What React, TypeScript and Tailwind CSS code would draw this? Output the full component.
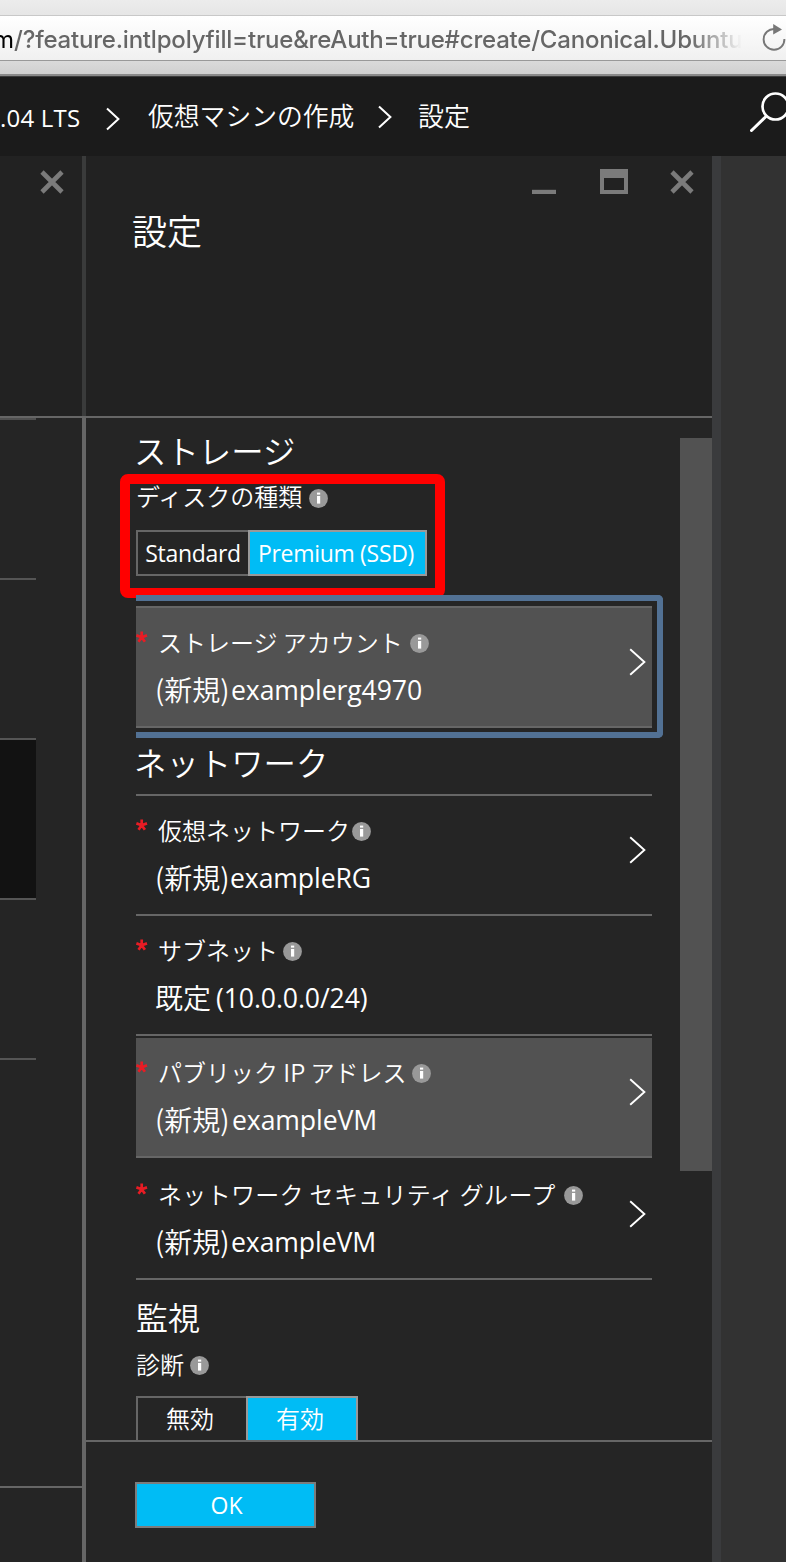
import type { ReactNode } from "react";

function InfoIcon({ className = "" }: { className?: string }) {
  return (
    <svg viewBox="0 0 19 19" className={`h-[19px] w-[19px] shrink-0 ${className}`}>
      <circle cx="9.5" cy="9.5" r="9.4" fill="#999" />
      <rect x="8" y="3.6" width="3.2" height="2" fill="#fff" />
      <rect x="8" y="7" width="3.2" height="7.6" fill="#fff" />
    </svg>
  );
}

function CloseIcon() {
  return (
    <svg viewBox="0 0 24 24" className="h-6 w-6 shrink-0">
      <path d="M2 2 L22 22 M22 2 L2 22" stroke="#7b7b7b" strokeWidth="4.6" fill="none" />
    </svg>
  );
}

function Crumb({ className = "" }: { className?: string }) {
  return (
    <svg viewBox="0 0 14 24" className={`h-6 w-3.5 shrink-0 ${className}`}>
      <path d="M1 1.4 L12.4 12 L1 22.6" stroke="#fff" strokeWidth="2" fill="none" />
    </svg>
  );
}

function RowChevron() {
  return (
    <svg viewBox="0 0 17 28" className="absolute top-10 right-1.5 h-7 w-[17px]">
      <path d="M1.2 1.2 L15.4 14 L1.2 26.8" stroke="#fff" strokeWidth="1.9" fill="none" />
    </svg>
  );
}

function Heading({ children, className }: { children: ReactNode; className: string }) {
  return <h2 className={`shrink-0 font-[350] whitespace-nowrap ${className}`}>{children}</h2>;
}

type SettingProps = {
  label: string;
  labelClass: string;
  prefix: string;
  prefixWidth: string;
  value: string;
  filled?: boolean;
  chevron?: boolean;
};

function Setting({ label, labelClass, prefix, prefixWidth, value, filled, chevron = true }: SettingProps) {
  return (
    <div className={`relative h-[120px] w-[516px] shrink-0 border-b-2 border-[#666] ${filled ? "bg-[#525252]" : ""}`}>
      <div className="flex h-[70px] items-center">
        <svg viewBox="0 0 12 12" className="-mt-3 mr-2.5 h-3 w-3 shrink-0">
          <path d="M5.7 6.2V0.4M5.7 6.2L0.4 4.4M5.7 6.2L11 4.4M5.7 6.2L2.5 10.8M5.7 6.2L8.9 10.8" stroke="#e81c24" strokeWidth="2.7" fill="none" />
        </svg>
        <span className={`mb-0.5 shrink-0 font-['Noto_Sans_CJK_JP',sans-serif] text-2xl leading-none font-[350] whitespace-nowrap ${labelClass}`}>{label}</span>
        <InfoIcon />
      </div>
      <div className="flex h-6 items-center pl-[19px] whitespace-nowrap">
        <span className={`mr-px mb-0.5 shrink-0 font-['Noto_Sans_CJK_JP',sans-serif] text-[28px] leading-none font-[350] ${prefixWidth}`}>{prefix}</span>
        <span className="text-[26.6px] leading-none tracking-[-0.1px]">{value}</span>
      </div>
      {chevron && <RowChevron />}
    </div>
  );
}

export default function App() {
  return (
    <div className="flex h-[1562px] w-[786px] flex-col overflow-hidden bg-[#252525] font-['Open_Sans','Noto_Sans_CJK_JP',sans-serif] text-white">
      <div className="h-[15px] shrink-0 bg-linear-to-b from-[#ececec] to-[#e6e6e6]" />
      <div className="flex h-[46px] shrink-0 items-center overflow-hidden border-t border-b border-t-[#c8c8c8] border-b-[#999] bg-linear-to-b from-white to-[#f0f0f0] font-['Inter',sans-serif]">
        <div className="h-8 w-[741px] shrink-0 overflow-hidden mask-[linear-gradient(to_right,black_690px,transparent_742px)]">
          <div className="-ml-[7px] pt-0.5 text-[24px] leading-8 whitespace-nowrap text-[#666]">
            <span className="text-black">m</span>
            <span className="font-medium tracking-[-0.2px]">/?feature.intlpolyfill=true&amp;reAuth=true#create/Canonical.Ubuntu</span>
          </div>
        </div>
        <svg viewBox="0 0 24 28" className="ml-[21px] h-7 w-6 shrink-0">
          <path d="M12.5 5 A10.4 10.4 0 1 0 22.4 15" stroke="#777" strokeWidth="1.9" fill="none" />
          <path d="M11.2 0 L20 5.4 L11.2 10.6 Z" fill="#777" />
        </svg>
      </div>
      <div className="h-[15px] shrink-0 border-b-2 border-b-[#8a8a8a] bg-linear-to-b from-[#dadada] to-[#d0d0d0]" />

      <header className="flex h-20 shrink-0 items-center border-t border-[#3c3c3c] bg-[#1b1b1b] pb-0.5 text-2xl leading-none whitespace-nowrap">
        <span className="w-[106px] shrink-0 pt-1 tracking-[0.2px]">.04 LTS</span>
        <Crumb className="mt-1.5" />
        <span className="ml-7 w-[230px] shrink-0 pt-[3px] text-[25.8px] font-[350]">仮想マシンの作成</span>
        <Crumb className="mt-0.5" />
        <span className="ml-[26px] w-[332px] shrink-0 text-[26px] font-[350]">設定</span>
        <svg viewBox="0 0 40 40" className="-mt-2 h-10 w-10 shrink-0">
          <circle cx="25.5" cy="14.5" r="13" stroke="#fff" strokeWidth="2.7" fill="none" />
          <path d="M16 24.5 L1.5 38.5" stroke="#fff" strokeWidth="3" strokeLinecap="round" />
        </svg>
      </header>

      <div className="flex min-h-0 flex-1">
        <aside className="flex w-[82px] shrink-0 flex-col">
          <div className="flex h-[262px] shrink-0 items-start border-b-2 border-[#666] bg-[#222] pt-3.5 pl-10">
            <CloseIcon />
          </div>
          <div className="h-[2px] w-9 shrink-0 bg-[#505050]" />
          <div className="h-40 w-9 shrink-0 border-b-2 border-[#555]" />
          <div className="h-40 w-9 shrink-0 border-b-2 border-[#555]" />
          <div className="h-40 w-9 shrink-0 border-b-2 border-[#555] bg-[#121212]" />
          <div className="h-40 w-9 shrink-0 border-b-2 border-[#555]" />
          <div className="h-[428px] shrink-0 border-b-2 border-[#666]" />
        </aside>
        <div className="flex w-1 shrink-0 flex-col">
          <div className="h-[260px] bg-[#3a3b3b]" />
          <div className="flex-1 bg-[#666]" />
        </div>

        <main className="flex w-[626px] shrink-0 flex-col">
          <div className="flex h-[262px] shrink-0 flex-col border-b-2 border-[#666] bg-[#222]">
            <div className="flex h-[52px] items-start justify-end pt-3.5 pr-[18px]">
              <svg viewBox="0 0 24 24" className="mr-11 h-6 w-6">
                <rect y="19.8" width="24" height="4.2" fill="#7b7b7b" />
              </svg>
              <svg viewBox="0 0 28 25" className="mr-[42px] -mt-px h-[25px] w-7">
                <path d="M0 0H28V25H0Z M4 9V21H24V9Z" fill="#7b7b7b" fillRule="evenodd" />
              </svg>
              <CloseIcon />
            </div>
            <h1 className="pl-[46px] text-[35px] leading-[47px] font-[350]">設定</h1>
          </div>

          <div className="flex h-[1022px] shrink-0 overflow-hidden">
            <div className="relative flex w-[594px] shrink-0 flex-col pl-[50px]">
              <Heading className="-ml-0.5 h-14 text-[32.4px] leading-[66px]">ストレージ</Heading>
              <div className="flex h-[46px] shrink-0 items-center">
                <span className="w-[173px] text-2xl font-[350] whitespace-nowrap">ディスクの種類</span>
                <InfoIcon className="mt-0.5" />
              </div>
              <div className="mt-[10px] flex h-[46px] w-[291px] shrink-0 text-[23px] leading-[43px] tracking-[-0.3px] whitespace-nowrap">
                <div className="w-28 border-2 border-r-0 border-[#666] text-center">Standard</div>
                <div className="flex-1 border-2 border-[#999] bg-[#00bcf5] pr-[3px] text-center">Premium (SSD)</div>
              </div>
              <div className="mt-[30px] h-[2px] w-[516px] shrink-0 bg-[#666]" />
              <Setting label="ストレージ アカウント" labelClass="w-[252px]" prefix="(新規)" prefixWidth="w-[75px]" value="examplerg4970" filled />
              <Heading className="-ml-0.5 h-[66px] text-[32.4px] leading-[71px]">ネットワーク</Heading>
              <div className="h-[2px] w-[516px] shrink-0 bg-[#666]" />
              <Setting label="仮想ネットワーク" labelClass="w-[194px]" prefix="(新規)" prefixWidth="w-[74px]" value="exampleRG" />
              <Setting label="サブネット" labelClass="w-[125px]" prefix="既定" prefixWidth="w-[60px]" value="(10.0.0.0/24)" chevron={false} />
              <div className="h-[2px] shrink-0" />
              <Setting label="パブリック IP アドレス" labelClass="w-[254px]" prefix="(新規)" prefixWidth="w-[76px]" value="exampleVM" filled />
              <div className="h-[2px] shrink-0" />
              <Setting label="ネットワーク セキュリティ グループ" labelClass="w-[406px] tracking-[0.32px]" prefix="(新規)" prefixWidth="w-[75px]" value="exampleVM" />
              <Heading className="h-[62px] text-[32px] leading-[75px]">監視</Heading>
              <div className="flex h-[46px] shrink-0 items-center">
                <span className="w-[54px] text-2xl font-[350]">診断</span>
                <InfoIcon />
              </div>
              <div className="mt-2 flex h-[46px] w-[222px] shrink-0 text-2xl leading-[41px] font-[350]">
                <div className="w-[110px] border-2 border-r-0 border-[#666] pr-1 text-center">無効</div>
                <div className="flex-1 border-2 border-[#999] bg-[#00bcf5] pr-1 text-center">有効</div>
              </div>
              <div className="absolute top-[56px] left-[34px] h-[124px] w-[325px] rounded-lg border-10 border-[#f00]" />
              <div className="absolute top-[177px] left-[50px] h-[143px] w-[527px] rounded-r-[5px] border-6 border-l-0 border-[#527194]" />
            </div>
            <div className="mt-5 h-[733px] w-8 shrink-0 bg-[#525252]" />
          </div>

          <footer className="flex-1 border-t-2 border-[#666] pt-10 pl-[49px]">
            <button className="block h-[46px] w-[181px] border-2 border-[#7c7c7c] bg-[#00bcf5] pl-0.5 text-[23px] leading-[43px]">OK</button>
          </footer>
        </main>
        <div className="w-[9px] shrink-0 bg-[#3a3b3d]" />
        <div className="flex-1 bg-[#323232]" />
      </div>
    </div>
  );
}
